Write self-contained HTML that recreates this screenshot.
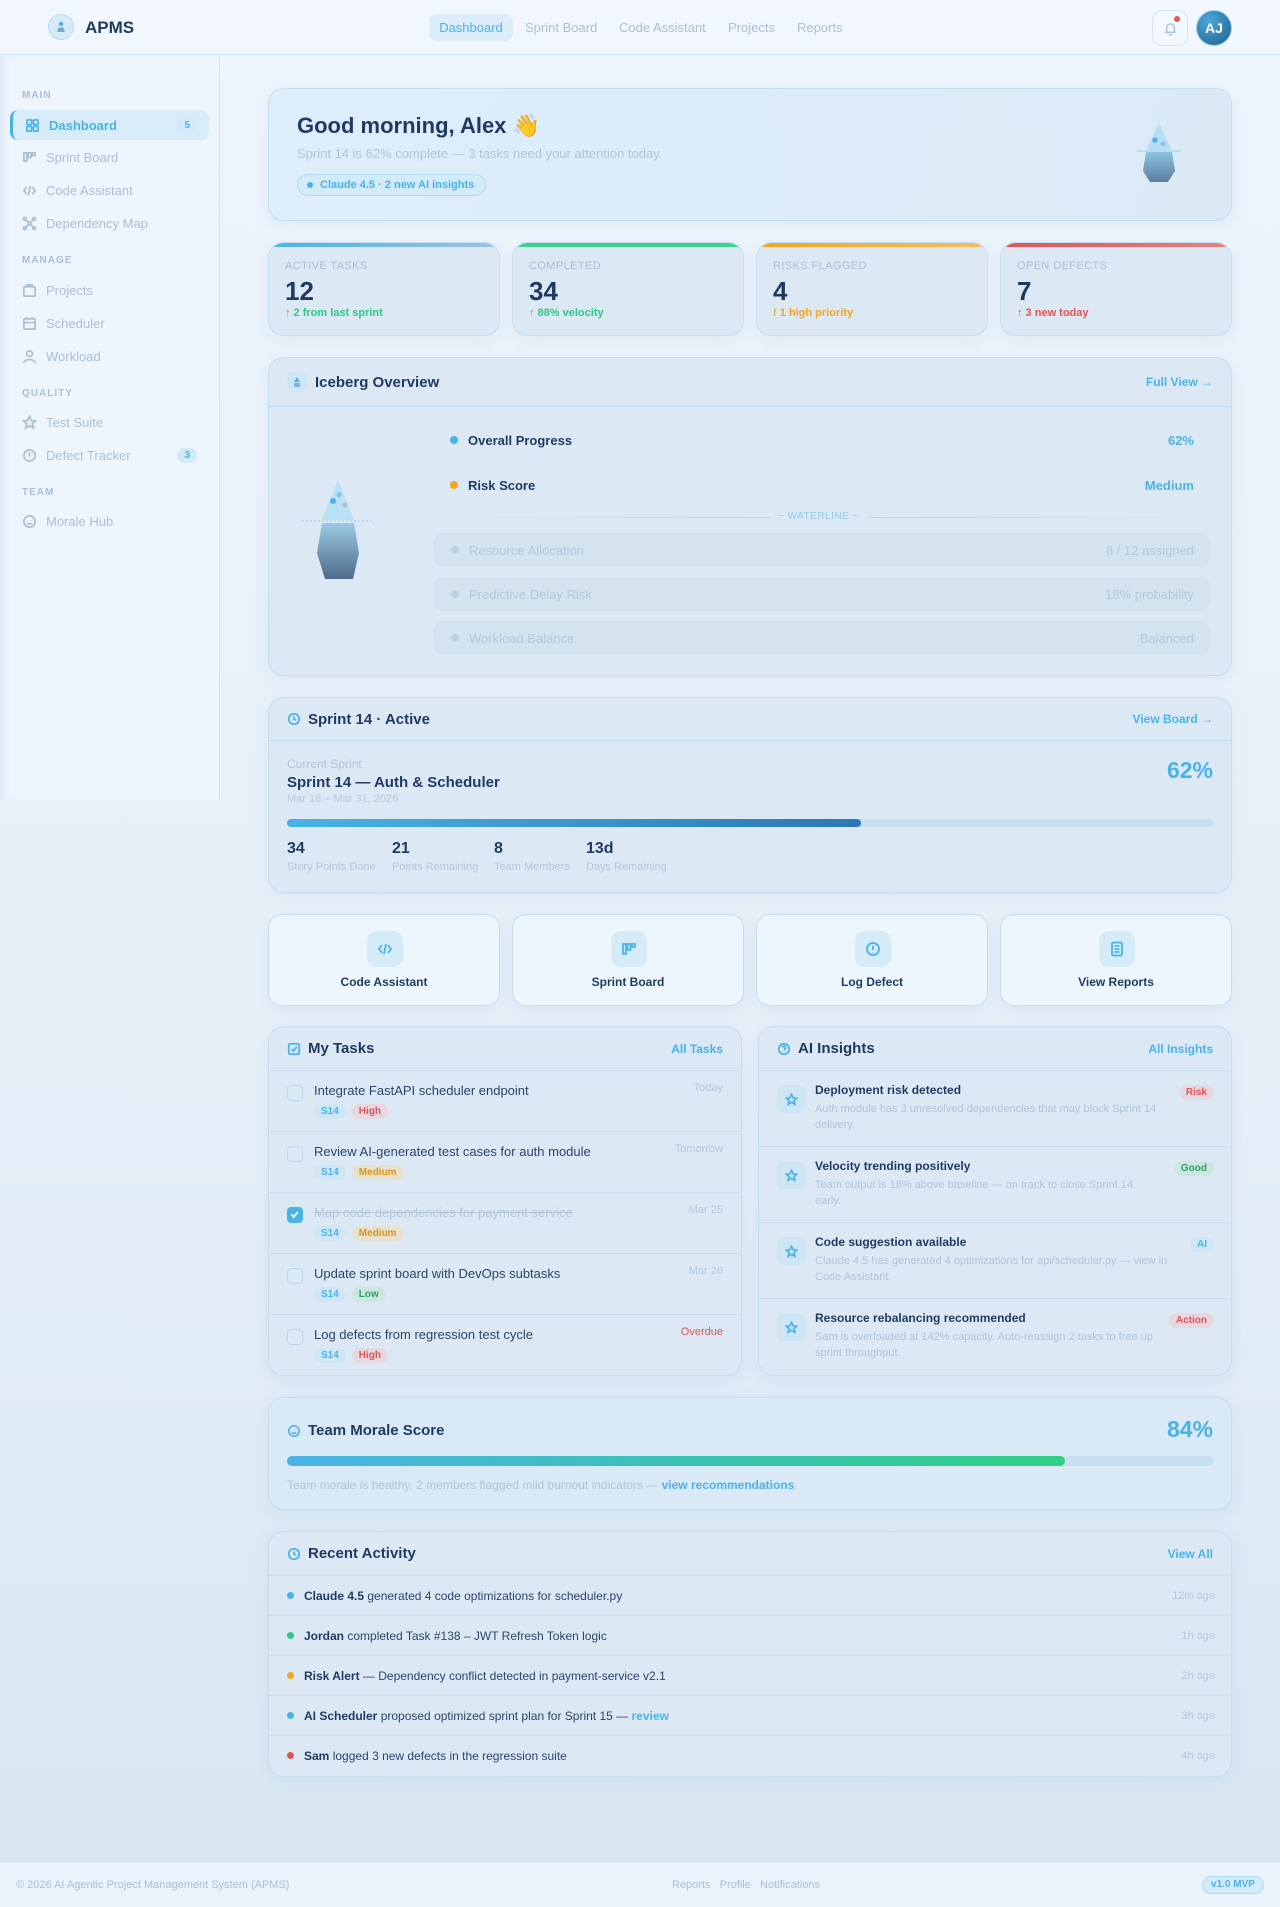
<!DOCTYPE html>
<html><head><meta charset="utf-8"><style>
*{box-sizing:border-box;margin:0;padding:0}
body{width:1280px;height:1907px;font-family:"Liberation Sans",sans-serif;background:linear-gradient(180deg,#eef5fc 0%,#e6f0f9 50%,#d8e6f2 100%);color:#1e3a5f;position:relative;overflow:hidden}
.abs{position:absolute}
.hdr{left:0;top:0;width:1280px;height:55px;background:#f1f7fd;border-bottom:1px solid #d3e6f4}
.side{left:0;top:56px;width:220px;height:744px;background:#eef5fc;border-right:1px solid #cfe3f2;box-shadow:inset 8px 0 10px -6px #d5e2ee}
.sec{position:absolute;left:22px;font-size:10px;font-weight:bold;letter-spacing:1px;color:#a9bfd4}
.it{position:absolute;left:10px;width:199px;height:30px;display:flex;align-items:center;padding-left:12px;font-size:13px;color:#a9bfd4;border-radius:8px}
.it svg{width:15px;height:15px;margin-right:9px;stroke:#a9bfd4;fill:none;stroke-width:1.8}
.it.on{background:#d7ebf8;color:#4ab3e6;font-weight:bold;border-left:3px solid #4ab3e6;padding-left:12px}
.it.on svg{stroke:#4ab3e6}
.bdg{position:absolute;right:12px;background:#d2eaf8;color:#4ab3e6;font-size:10px;font-weight:bold;padding:2px 7px;border-radius:8px}
.card{position:absolute;background:#dce9f4;border:1px solid #c3def1;border-radius:16px;box-shadow:0 4px 14px rgba(150,185,215,.18)}
.ch{position:absolute;left:0;right:0;top:0;border-bottom:1px solid #bfdcf1;display:flex;align-items:center;padding:0 18px;font-size:15px;font-weight:bold}
.ch .lnk{margin-left:auto;font-size:12px;color:#4ab3e6;font-weight:bold}
.ch svg{width:14px;height:14px;stroke:#4ab3e6;fill:none;stroke-width:2;margin-right:7px}
.stat{top:242px;width:232px;height:94px;overflow:hidden}
.stat .bar{position:absolute;left:0;right:0;top:0;height:4px}
.stat .l{position:absolute;left:16px;top:17px;font-size:11px;color:#a9bfd4;letter-spacing:.4px}
.stat .n{position:absolute;left:16px;top:33px;font-size:26px;font-weight:bold}
.stat .s{position:absolute;left:16px;top:64px;font-size:11px;font-weight:bold}
.row{position:absolute;left:434px;width:776px;height:34px;display:flex;align-items:center;padding:0 16px;font-size:13px;font-weight:bold}
.row .v{margin-left:auto;color:#4ab3e6}
.dot{width:8px;height:8px;border-radius:50%;margin-right:10px;display:inline-block}
.row.dim{background:#d5e3ef;border-radius:10px;color:#b4c8da;font-weight:normal;border-left:1px dashed #c6dced}
.row.dim .v{color:#b4c8da}
.qa{top:914px;width:232px;height:92px;background:#eef6fd;border-radius:14px}
.qa .ic{position:absolute;left:98px;top:16px;width:36px;height:36px;border-radius:10px;background:#d5ebf8;display:flex;align-items:center;justify-content:center}
.qa .ic svg{width:16px;height:16px;stroke:#4ab3e6;fill:none;stroke-width:1.8}
.qa .t{position:absolute;left:0;right:0;top:60px;text-align:center;font-size:12px;font-weight:bold}
.task{position:absolute;left:0;width:472px;height:61px;border-top:1px solid #c9e0f1}
.cb{position:absolute;left:18px;top:14px;width:16px;height:16px;border:1.5px solid #bcd7ec;border-radius:4px}
.task .tt{position:absolute;left:45px;top:12px;font-size:13px;color:#2a4468}
.task .dt{position:absolute;right:18px;top:11px;font-size:11px;color:#b3c8da}
.tags{position:absolute;left:45px;top:33px;display:flex;gap:6px}
.tag{font-size:10px;font-weight:bold;padding:2px 7px;border-radius:8px}
.s14{background:#cfe6f6;color:#4ab3e6}.hi{background:#e7d7e0;color:#e05454}.me{background:#e7e1d0;color:#d9961a}.lo{background:#cde6df;color:#2aa36a}
.ins{position:absolute;left:0;width:473px;height:76px;border-top:1px solid #c9e0f1}
.ins .ic{position:absolute;left:18px;top:14px;width:28px;height:28px;border-radius:7px;background:#cde5f5;display:flex;align-items:center;justify-content:center}
.ins .ic svg{width:13px;height:13px;stroke:#4ab3e6;fill:none;stroke-width:2}
.ins .tt{position:absolute;left:56px;top:12px;font-size:12px;font-weight:bold}
.ins .d{position:absolute;left:56px;top:30px;width:343px;font-size:11px;line-height:16px;color:#b0c5d8}
.ins .tag{position:absolute;right:18px;top:14px}
.act{position:absolute;left:0;width:964px;height:40px;border-top:1px solid #c9e0f1;display:flex;align-items:center;padding:0 18px;font-size:12px;color:#2a4468}
.act b{color:#1e3a5f}
.act .dot{width:7px;height:7px;margin-right:10px}
.act .tm{margin-left:auto;font-size:11px;color:#b3c8da}
</style></head><body>
<div class="abs hdr">
 <div class="abs" style="left:48px;top:14px;width:26px;height:26px;border-radius:50%;background:#d6ebf8;border:1px solid #b7dcf2;display:flex;align-items:center;justify-content:center"><svg width="14" height="14" viewBox="0 0 14 14"><circle cx="7" cy="4" r="2.2" fill="#4ab3e6"/><path d="M3 12 L4.5 7.5 H9.5 L11 12Z" fill="#7fa6c6"/></svg></div>
 <div class="abs" style="left:85px;top:18px;font-size:17px;font-weight:bold;color:#1e3a5f">APMS</div>
 <div class="abs" style="left:429px;top:14px;width:84px;height:27px;border-radius:8px;background:#dcedf9;color:#4ab3e6;font-size:13px;text-align:center;line-height:27px">Dashboard</div>
 <div class="abs" style="left:525px;top:20px;font-size:13px;color:#a9bfd4">Sprint Board</div>
 <div class="abs" style="left:619px;top:20px;font-size:13px;color:#a9bfd4">Code Assistant</div>
 <div class="abs" style="left:728px;top:20px;font-size:13px;color:#a9bfd4">Projects</div>
 <div class="abs" style="left:797px;top:20px;font-size:13px;color:#a9bfd4">Reports</div>
 <div class="abs" style="left:1152px;top:10px;width:36px;height:36px;border-radius:10px;border:1px solid #cfe6f6;background:#f3f9fe;display:flex;align-items:center;justify-content:center"><svg width="15" height="15" viewBox="0 0 16 16" fill="none" stroke="#a9bfd4" stroke-width="1.4"><path d="M4 11 V7 a4 4 0 0 1 8 0 V11 L13 12 H3Z M6.5 13.5 a1.5 1.5 0 0 0 3 0"/></svg><span class="abs" style="right:7px;top:5px;width:6px;height:6px;border-radius:50%;background:#e55"></span></div>
 <div class="abs" style="left:1196px;top:10px;width:36px;height:36px;border-radius:50%;background:radial-gradient(circle at 35% 30%,#4aa7d8,#1f5f8f);border:1px solid #9fd0ec;color:#fff;font-weight:bold;font-size:14px;text-align:center;line-height:35px">AJ</div>
</div>

<div class="abs side">
 <div class="sec" style="top:34px">MAIN</div>
 <div class="it on" style="top:54px"><svg viewBox="0 0 16 16"><rect x="2" y="2" width="5" height="5" rx="1"/><rect x="9" y="2" width="5" height="5" rx="1"/><rect x="2" y="9" width="5" height="5" rx="1"/><rect x="9" y="9" width="5" height="5" rx="1"/></svg>Dashboard<span class="bdg">5</span></div>
 <div class="it" style="top:86px"><svg viewBox="0 0 16 16"><rect x="2" y="3" width="3" height="9"/><rect x="6.5" y="3" width="3" height="5"/><rect x="11" y="3" width="3" height="3"/></svg>Sprint Board</div>
 <div class="it" style="top:119px"><svg viewBox="0 0 16 16"><path d="M5 4 L2 8 L5 12 M11 4 L14 8 L11 12 M9 3 L7 13"/></svg>Code Assistant</div>
 <div class="it" style="top:152px"><svg viewBox="0 0 16 16"><circle cx="3" cy="3" r="1.5"/><circle cx="13" cy="3" r="1.5"/><circle cx="3" cy="13" r="1.5"/><circle cx="13" cy="13" r="1.5"/><circle cx="8" cy="8" r="1.5"/><path d="M4 4 L7 7 M12 4 L9 7 M4 12 L7 9 M12 12 L9 9"/></svg>Dependency Map</div>
 <div class="sec" style="top:199px">MANAGE</div>
 <div class="it" style="top:219px"><svg viewBox="0 0 16 16"><rect x="2" y="4" width="12" height="10" rx="1"/><path d="M5 4 V2 H11 V4"/></svg>Projects</div>
 <div class="it" style="top:252px"><svg viewBox="0 0 16 16"><rect x="2" y="3" width="12" height="11" rx="1"/><path d="M2 7 H14 M5 1 V4 M11 1 V4"/></svg>Scheduler</div>
 <div class="it" style="top:285px"><svg viewBox="0 0 16 16"><circle cx="8" cy="5" r="3"/><path d="M2 15 C2 10 14 10 14 15"/></svg>Workload</div>
 <div class="sec" style="top:332px">QUALITY</div>
 <div class="it" style="top:351px"><svg viewBox="0 0 16 16"><path d="M8 1.5 L10 6 L14.5 6.3 L11 9.3 L12.2 14 L8 11.4 L3.8 14 L5 9.3 L1.5 6.3 L6 6Z"/></svg>Test Suite</div>
 <div class="it" style="top:384px"><svg viewBox="0 0 16 16"><circle cx="8" cy="8" r="6"/><path d="M8 4.5 V9 M8 11 V11.5"/></svg>Defect Tracker<span class="bdg">3</span></div>
 <div class="sec" style="top:431px">TEAM</div>
 <div class="it" style="top:450px"><svg viewBox="0 0 16 16"><circle cx="8" cy="8" r="6"/><path d="M5.5 9.5 C6.5 11 9.5 11 10.5 9.5 M6 6.5 V7 M10 6.5 V7"/></svg>Morale Hub</div>
</div>

<div class="card" style="left:268px;top:88px;width:964px;height:133px;background:linear-gradient(100deg,#ddeefa,#dbe9f5)">
 <div class="abs" style="left:28px;top:24px;font-size:22px;font-weight:bold">Good morning, Alex 👋</div>
 <div class="abs" style="left:28px;top:57px;font-size:13px;color:#b0c5d8">Sprint 14 is 62% complete — 3 tasks need your attention today.</div>
 <div class="abs" style="left:28px;top:85px;height:22px;padding:0 11px 0 22px;border-radius:11px;background:#d3ebf9;border:1px solid #aedaf2;color:#4ab3e6;font-size:11px;font-weight:bold;line-height:20px">Claude 4.5 · 2 new AI insights<span class="abs" style="left:9px;top:7px;width:6px;height:6px;border-radius:50%;background:#4ab3e6"></span></div>
 <svg class="abs" style="left:866px;top:30px" width="48" height="66" viewBox="0 0 48 66"><path d="M24 4 L37 32 H11Z" fill="#b6def4"/><circle cx="20" cy="21" r="2.8" fill="#4ab3e6"/><circle cx="28" cy="25" r="2.5" fill="#9dbcd6"/><line x1="2" y1="32" x2="46" y2="32" stroke="#b9dcf1" stroke-width="2"/><path d="M11 33 H37 L40 52 L33 63 H15 L8 52Z" fill="url(#g1)"/><defs><linearGradient id="g1" x1="0" y1="0" x2="0" y2="1"><stop offset="0" stop-color="#8cc4e4"/><stop offset="1" stop-color="#5c7d9d"/></linearGradient></defs></svg>
</div>

<div class="card stat" style="left:268px"><div class="bar" style="background:linear-gradient(90deg,#4ab3e6,#9fc2dc)"></div><div class="l">ACTIVE TASKS</div><div class="n">12</div><div class="s" style="color:#2fc787">↑ 2 from last sprint</div></div>
<div class="card stat" style="left:512px"><div class="bar" style="background:#3fcf8e"></div><div class="l">COMPLETED</div><div class="n">34</div><div class="s" style="color:#2fc787">↑ 88% velocity</div></div>
<div class="card stat" style="left:756px"><div class="bar" style="background:linear-gradient(90deg,#f2a623,#f6be5c)"></div><div class="l">RISKS FLAGGED</div><div class="n">4</div><div class="s" style="color:#f2a623">! 1 high priority</div></div>
<div class="card stat" style="left:1000px"><div class="bar" style="background:linear-gradient(90deg,#e05454,#e88080)"></div><div class="l">OPEN DEFECTS</div><div class="n">7</div><div class="s" style="color:#e05454">↑ 3 new today</div></div>

<div class="card" style="left:268px;top:357px;width:964px;height:319px">
 <div class="ch" style="height:49px"><span style="width:20px;height:20px;border-radius:5px;background:#cfe6f6;display:inline-flex;align-items:center;justify-content:center;margin-right:8px"><svg style="margin:0;width:10px;height:12px" viewBox="0 0 10 12"><path d="M5 1 L8 6 H2Z" fill="#4ab3e6" stroke="none"/><rect x="2" y="7" width="6" height="4" fill="#7fb8dc" stroke="none"/></svg></span>Iceberg Overview<span class="lnk">Full View →</span></div>
</div>
<svg class="abs" style="left:300px;top:478px" width="76" height="104" viewBox="0 0 76 104"><path d="M38 2 L54 42 H22Z" fill="#b9e0f5"/><circle cx="33" cy="23" r="3" fill="#4ab3e6"/><circle cx="39" cy="17" r="2.5" fill="#7fc4ea"/><circle cx="45" cy="27" r="2.5" fill="#a9bfd4"/><line x1="2" y1="43" x2="74" y2="43" stroke="#b9dcf1" stroke-width="2" stroke-dasharray="2 2"/><path d="M22 45 H54 L59 75 L53 101 H25 L17 75Z" fill="url(#g2)"/><defs><linearGradient id="g2" x1="0" y1="0" x2="0" y2="1"><stop offset="0" stop-color="#9ccbe6"/><stop offset="1" stop-color="#4f6a8c"/></linearGradient></defs></svg>
<div class="row" style="top:423px;color:#1e3a5f"><span class="dot" style="background:#4ab3e6"></span>Overall Progress<span class="v">62%</span></div>
<div class="row" style="top:468px;color:#1e3a5f"><span class="dot" style="background:#f2a623"></span>Risk Score<span class="v">Medium</span></div>
<div class="abs" style="left:452px;top:517px;width:760px;height:1px;background:linear-gradient(90deg,transparent,#b0d8f0,transparent)"></div>
<div class="abs" style="left:770px;top:511px;padding:0 8px;font-size:10px;letter-spacing:.5px;color:#8fcbed;background:#dce9f4">~ WATERLINE ~</div>
<div class="row dim" style="top:533px"><span class="dot" style="background:#bfd2e2"></span>Resource Allocation<span class="v">8 / 12 assigned</span></div>
<div class="row dim" style="top:577px"><span class="dot" style="background:#bfd2e2"></span>Predictive Delay Risk<span class="v">18% probability</span></div>
<div class="row dim" style="top:621px"><span class="dot" style="background:#bfd2e2"></span>Workload Balance<span class="v">Balanced</span></div>

<div class="card" style="left:268px;top:697px;width:964px;height:196px">
 <div class="ch" style="height:43px"><svg viewBox="0 0 16 16"><circle cx="8" cy="8" r="6"/><path d="M8 5 V8 L10 9.5"/></svg>Sprint 14 · Active<span class="lnk">View Board →</span></div>
 <div class="abs" style="left:18px;top:59px;font-size:12px;color:#b0c5d8">Current Sprint</div>
 <div class="abs" style="left:18px;top:76px;font-size:15px;font-weight:bold">Sprint 14 — Auth &amp; Scheduler</div>
 <div class="abs" style="left:18px;top:95px;font-size:11px;color:#b8cbdc">Mar 18 – Mar 31, 2026</div>
 <div class="abs" style="right:18px;top:59px;font-size:23px;font-weight:bold;color:#4ab3e6">62%</div>
 <div class="abs" style="left:18px;top:121px;width:926px;height:8px;border-radius:4px;background:#c6e0f2"><div style="width:574px;height:8px;border-radius:4px;background:linear-gradient(90deg,#4ab3e6,#2c78b4)"></div></div>
 <div class="abs" style="left:18px;top:142px;font-size:16px;font-weight:bold">34</div><div class="abs" style="left:18px;top:163px;font-size:11px;color:#b3c8da">Story Points Done</div>
 <div class="abs" style="left:123px;top:142px;font-size:16px;font-weight:bold">21</div><div class="abs" style="left:123px;top:163px;font-size:11px;color:#b3c8da">Points Remaining</div>
 <div class="abs" style="left:225px;top:142px;font-size:16px;font-weight:bold">8</div><div class="abs" style="left:225px;top:163px;font-size:11px;color:#b3c8da">Team Members</div>
 <div class="abs" style="left:317px;top:142px;font-size:16px;font-weight:bold">13d</div><div class="abs" style="left:317px;top:163px;font-size:11px;color:#b3c8da">Days Remaining</div>
</div>

<div class="card qa" style="left:268px"><div class="ic"><svg viewBox="0 0 16 16"><path d="M5 4 L2 8 L5 12 M11 4 L14 8 L11 12 M9 3 L7 13"/></svg></div><div class="t">Code Assistant</div></div>
<div class="card qa" style="left:512px"><div class="ic"><svg viewBox="0 0 16 16"><rect x="2" y="3" width="3" height="10"/><rect x="6.5" y="3" width="3" height="6"/><rect x="11" y="3" width="3" height="3"/></svg></div><div class="t">Sprint Board</div></div>
<div class="card qa" style="left:756px"><div class="ic"><svg viewBox="0 0 16 16"><circle cx="8" cy="8" r="6"/><path d="M8 4.5 V9 M8 11 V11.5"/></svg></div><div class="t">Log Defect</div></div>
<div class="card qa" style="left:1000px"><div class="ic"><svg viewBox="0 0 16 16"><rect x="3" y="1.5" width="10" height="13" rx="1.5"/><path d="M5.5 5 H10.5 M5.5 8 H10.5 M5.5 11 H10.5"/></svg></div><div class="t">View Reports</div></div>

<div class="card" style="left:268px;top:1026px;width:474px;height:350px;overflow:hidden">
 <div class="ch" style="height:43px;border:none"><svg viewBox="0 0 16 16"><rect x="2" y="2" width="12" height="12" rx="2"/><path d="M5 8 L7.5 10.5 L11 5.5"/></svg>My Tasks<span class="lnk">All Tasks</span></div>
 <div class="task" style="top:43px"><div class="cb"></div><div class="tt">Integrate FastAPI scheduler endpoint</div><div class="dt">Today</div><div class="tags"><span class="tag s14">S14</span><span class="tag hi">High</span></div></div>
 <div class="task" style="top:104px"><div class="cb"></div><div class="tt">Review AI-generated test cases for auth module</div><div class="dt">Tomorrow</div><div class="tags"><span class="tag s14">S14</span><span class="tag me">Medium</span></div></div>
 <div class="task" style="top:165px"><div class="cb" style="background:#4ab3e6;border-color:#4ab3e6"><svg width="13" height="13" viewBox="0 0 16 16" style="position:absolute;left:0;top:0"><path d="M4 8 L7 11 L12 5" stroke="#fff" stroke-width="2.2" fill="none"/></svg></div><div class="tt" style="color:#b3c8da;text-decoration:line-through">Map code dependencies for payment service</div><div class="dt">Mar 25</div><div class="tags"><span class="tag s14">S14</span><span class="tag me">Medium</span></div></div>
 <div class="task" style="top:226px"><div class="cb"></div><div class="tt">Update sprint board with DevOps subtasks</div><div class="dt">Mar 26</div><div class="tags"><span class="tag s14">S14</span><span class="tag lo">Low</span></div></div>
 <div class="task" style="top:287px"><div class="cb"></div><div class="tt">Log defects from regression test cycle</div><div class="dt" style="color:#e05454">Overdue</div><div class="tags"><span class="tag s14">S14</span><span class="tag hi">High</span></div></div>
</div>

<div class="card" style="left:758px;top:1026px;width:474px;height:350px;overflow:hidden">
 <div class="ch" style="height:43px;border:none"><svg viewBox="0 0 16 16"><circle cx="8" cy="8" r="6"/><path d="M6.3 6.5 a1.8 1.8 0 1 1 2.5 1.6 L8 9 M8 11 V11.5"/></svg>AI Insights<span class="lnk">All Insights</span></div>
 <div class="ins" style="top:43px"><div class="ic"><svg viewBox="0 0 16 16"><path d="M8 1.5 L10 6 L14.5 6.3 L11 9.3 L12.2 14 L8 11.4 L3.8 14 L5 9.3 L1.5 6.3 L6 6Z"/></svg></div><div class="tt">Deployment risk detected</div><div class="d">Auth module has 3 unresolved dependencies that may block Sprint 14 delivery.</div><span class="tag hi">Risk</span></div>
 <div class="ins" style="top:119px"><div class="ic"><svg viewBox="0 0 16 16"><path d="M8 1.5 L10 6 L14.5 6.3 L11 9.3 L12.2 14 L8 11.4 L3.8 14 L5 9.3 L1.5 6.3 L6 6Z"/></svg></div><div class="tt">Velocity trending positively</div><div class="d">Team output is 18% above baseline — on track to close Sprint 14 early.</div><span class="tag lo">Good</span></div>
 <div class="ins" style="top:195px"><div class="ic"><svg viewBox="0 0 16 16"><path d="M8 1.5 L10 6 L14.5 6.3 L11 9.3 L12.2 14 L8 11.4 L3.8 14 L5 9.3 L1.5 6.3 L6 6Z"/></svg></div><div class="tt">Code suggestion available</div><div class="d" style="width:362px">Claude 4.5 has generated 4 optimizations for api/scheduler.py — view in Code Assistant.</div><span class="tag s14">AI</span></div>
 <div class="ins" style="top:271px"><div class="ic"><svg viewBox="0 0 16 16"><path d="M8 1.5 L10 6 L14.5 6.3 L11 9.3 L12.2 14 L8 11.4 L3.8 14 L5 9.3 L1.5 6.3 L6 6Z"/></svg></div><div class="tt">Resource rebalancing recommended</div><div class="d">Sam is overloaded at 142% capacity. Auto-reassign 2 tasks to free up sprint throughput.</div><span class="tag hi">Action</span></div>
</div>

<div class="card" style="left:268px;top:1397px;width:964px;height:113px;background:#d9e9f5">
 <div class="abs" style="left:18px;top:24px;font-size:15px;font-weight:bold;display:flex;align-items:center"><svg width="14" height="14" viewBox="0 0 16 16" fill="none" stroke="#4ab3e6" stroke-width="1.8" style="margin-right:7px"><circle cx="8" cy="8" r="6"/><path d="M5.5 9.5 C6.5 11 9.5 11 10.5 9.5 M6 6.5 V7 M10 6.5 V7"/></svg>Team Morale Score</div>
 <div class="abs" style="right:18px;top:18px;font-size:23px;font-weight:bold;color:#4ab3e6">84%</div>
 <div class="abs" style="left:18px;top:58px;width:926px;height:10px;border-radius:5px;background:#c6e0f2"><div style="width:778px;height:10px;border-radius:5px;background:linear-gradient(90deg,#4ab3e6,#2fcf86)"></div></div>
 <div class="abs" style="left:18px;top:80px;font-size:12px;color:#b0c5d8">Team morale is healthy. 2 members flagged mild burnout indicators — <b style="color:#4ab3e6">view recommendations</b>.</div>
</div>

<div class="card" style="left:268px;top:1531px;width:964px;height:246px;overflow:hidden">
 <div class="ch" style="height:43px;border:none"><svg viewBox="0 0 16 16"><circle cx="8" cy="8" r="6"/><path d="M8 5 V8 L10 9.5"/></svg>Recent Activity<span class="lnk">View All</span></div>
 <div class="act" style="top:43px"><span class="dot" style="background:#4ab3e6"></span><b>Claude 4.5</b>&nbsp;generated 4 code optimizations for scheduler.py<span class="tm">12m ago</span></div>
 <div class="act" style="top:83px"><span class="dot" style="background:#2fc787"></span><b>Jordan</b>&nbsp;completed Task #138 – JWT Refresh Token logic<span class="tm">1h ago</span></div>
 <div class="act" style="top:123px"><span class="dot" style="background:#f2a623"></span><b>Risk Alert</b>&nbsp;— Dependency conflict detected in payment-service v2.1<span class="tm">2h ago</span></div>
 <div class="act" style="top:163px"><span class="dot" style="background:#4ab3e6"></span><b>AI Scheduler</b>&nbsp;proposed optimized sprint plan for Sprint 15 —&nbsp;<b style="color:#4ab3e6">review</b><span class="tm">3h ago</span></div>
 <div class="act" style="top:203px"><span class="dot" style="background:#e05454"></span><b>Sam</b>&nbsp;logged 3 new defects in the regression suite<span class="tm">4h ago</span></div>
</div>

<div class="abs" style="left:0;top:1862px;width:1280px;height:45px;background:#eaf3fb;border-top:1px solid #e0ecf6">
 <div class="abs" style="left:16px;top:16px;font-size:11px;color:#a9bfd4">© 2026 AI Agentic Project Management System (APMS)</div>
 <div class="abs" style="left:672px;top:16px;font-size:11px;color:#a9bfd4">Reports&nbsp;&nbsp;&nbsp;Profile&nbsp;&nbsp;&nbsp;Notifications</div>
 <div class="abs" style="left:1202px;top:13px;width:62px;height:18px;border-radius:9px;background:#d3ebf9;border:1px solid #aedaf2;color:#4ab3e6;font-size:10px;font-weight:bold;text-align:center;line-height:16px">v1.0 MVP</div>
</div>
</body></html>
